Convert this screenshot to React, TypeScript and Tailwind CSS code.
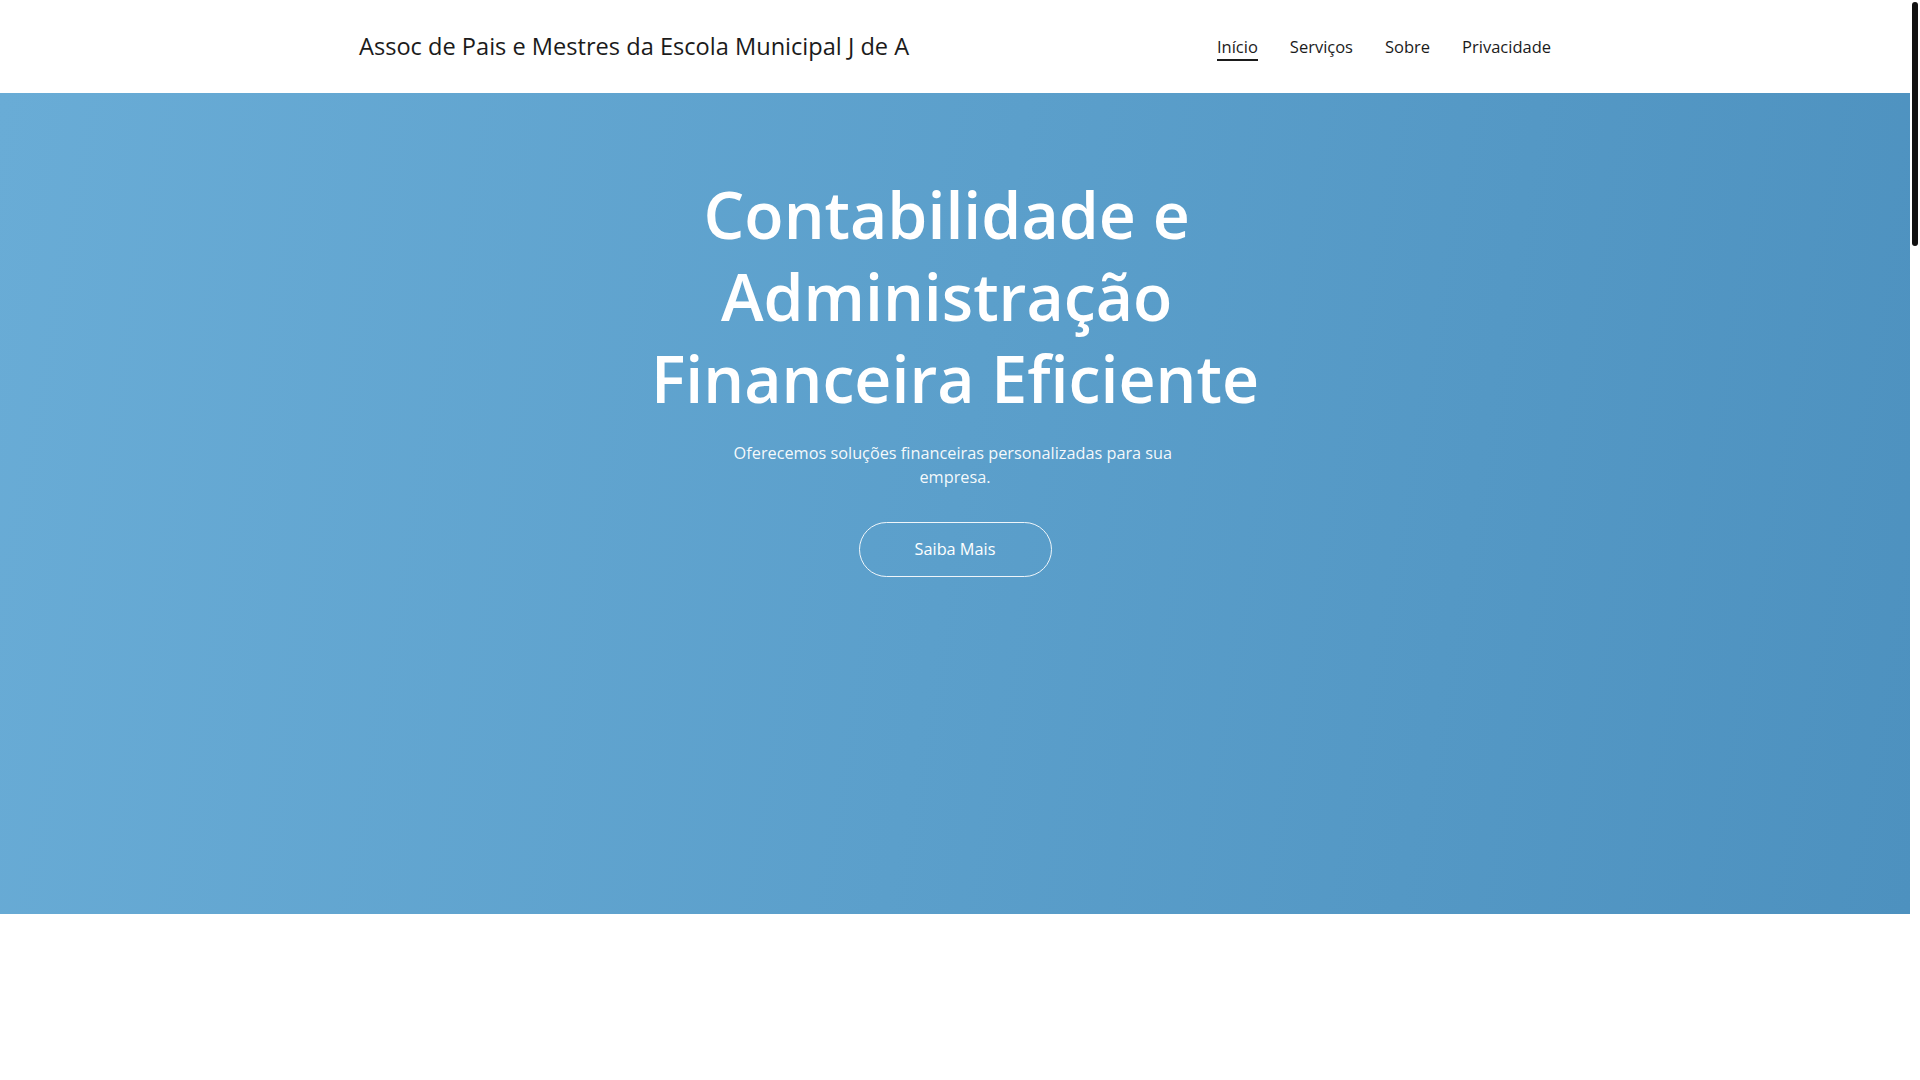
import React from 'react';

// Navigation items in the header
const navItems = [
  { label: 'Início', active: true },
  { label: 'Serviços', active: false },
  { label: 'Sobre', active: false },
  { label: 'Privacidade', active: false },
];

const Header: React.FC = () => (
  <header className="h-[93px] bg-white">
    <div className="mx-auto flex h-full max-w-[1192px] items-center justify-between">
      <h1 className="text-[23.6px] font-normal text-[#1b1b1b]">Assoc de Pais e Mestres da Escola Municipal J de A</h1>
      <nav className="flex items-center gap-8">
        {navItems.map((item) => (
          <a
            key={item.label}
            href="#"
            className={`border-b-2 pt-[2px] text-[16.5px] leading-[24px] text-[#1b1b1b] ${item.active ? 'border-[#1b1b1b]' : 'border-transparent'}`}
          >
            {item.label}
          </a>
        ))}
      </nav>
    </div>
  </header>
);

const Hero: React.FC = () => (
  <section className="flex h-[821px] flex-col items-center bg-[linear-gradient(100deg,#69acd6_0%,#5b9fcb_50%,#4d91bf_100%)] pt-[80px] text-center">
    <h2 className="max-w-[700px] whitespace-break-spaces text-[64.4px] leading-[82px] font-semibold text-white">
      Contabilidade e Administração Financeira Eficiente
    </h2>
    <p className="mt-[22px] max-w-[480px] whitespace-break-spaces text-[16.3px] leading-[24px] text-white/95">
      Oferecemos soluções financeiras personalizadas para sua empresa.
    </p>
    <a
      href="#"
      className="mt-[33px] flex h-[55px] w-[193px] items-center justify-center rounded-full border border-white/90 text-[16.3px] text-white"
    >
      Saiba Mais
    </a>
  </section>
);

export default function App() {
  return (
    <div className="relative min-h-screen bg-white font-['Open_Sans',sans-serif]">
      {/* page content, leaving room for the scrollbar track */}
      <div className="mr-[10px] min-h-[4780px]">
        <Header />
        <Hero />
      </div>
      {/* scrollbar thumb */}
      <div className="fixed top-[2px] right-[2px] h-[244px] w-[6px] rounded-full bg-[#111111]" />
    </div>
  );
}
